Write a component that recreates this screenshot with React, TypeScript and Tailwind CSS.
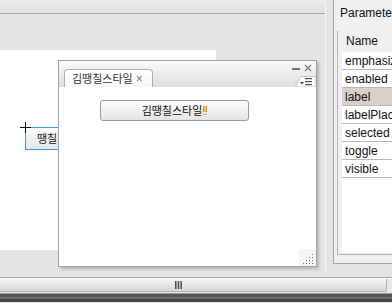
import React from 'react';

const ko = { fontFamily: '"Noto Sans CJK KR", "Noto Sans", sans-serif' };
const latin = { fontFamily: '"Liberation Sans", Arial, sans-serif' };

const params = ['emphasize', 'enabled', 'label', 'labelPlacement', 'selected', 'toggle', 'visible'];

const WindowControls: React.FC = () => (
  <div className="absolute right-[4px] top-[3px] flex items-center gap-[4px]">
    <svg width="8" height="8" viewBox="0 0 8 8">
      <rect x="0" y="4" width="8" height="2" fill="#6e6e6e" />
    </svg>
    <svg width="8" height="8" viewBox="0 0 8 8">
      <path d="M1 1 L7 7 M7 1 L1 7" stroke="#7a7a7a" strokeWidth="1.2" />
    </svg>
  </div>
);

const ViewMenu: React.FC = () => (
  <svg className="absolute right-0 bottom-0" width="21" height="11" viewBox="0 0 21 11">
    <path d="M0 11 L6 0.5 L21 0.5 L21 11 Z" fill="#fbfbfb" stroke="#c4c4c4" strokeWidth="1" />
    <path d="M5 6 L9 6 L7 8.5 Z" fill="#4a4a4a" />
    <rect x="10" y="2" width="7" height="1.2" fill="#4a4a4a" />
    <rect x="10" y="5" width="7" height="1.2" fill="#4a4a4a" />
    <rect x="10" y="8" width="7" height="1.2" fill="#4a4a4a" />
  </svg>
);

const Grip: React.FC = () => (
  <div className="absolute right-0 bottom-0 w-[17px] h-[17px] bg-[#f4f4f4] flex items-end justify-end pr-[3px] pb-[2px]">
    <svg width="10" height="10" viewBox="0 0 10 10">
      {[
        [8, 0], [8, 3], [8, 6], [8, 9],
        [5, 3], [5, 6], [5, 9],
        [2, 6], [2, 9],
        [-1, 9],
      ].map(([x, y], i) => (
        <rect key={i} x={x + 1} y={y} width="1" height="1" fill="#707070" />
      ))}
    </svg>
  </div>
);

const Marker: React.FC = () => (
  <svg width="4" height="9" viewBox="0 0 4 9" className="ml-[1px]">
    <rect x="0" y="0" width="1.5" height="6" fill="#f08a1c" />
    <rect x="2.5" y="0" width="1.5" height="6" fill="#f08a1c" />
    <rect x="0" y="7.5" width="1.5" height="1.5" fill="#f0a040" />
    <rect x="2.5" y="7.5" width="1.5" height="1.5" fill="#f0a040" />
  </svg>
);

const FloatingView: React.FC = () => (
  <div className="absolute left-[58px] top-[60px] w-[259px] h-[207px] border border-[#a2a2a2] bg-white flex flex-col shadow-[2px_2px_3px_rgba(0,0,0,0.22)]">
    <div className="relative h-[26px] shrink-0 bg-gradient-to-b from-[#fafafa] to-[#dedede] flex items-end pl-[5px]">
      <div
        className="h-[18px] w-[89px] rounded-t-[4px] border border-b-0 border-[#aeaeae] bg-gradient-to-b from-white to-[#f6f6f6] flex items-center pl-[7px] gap-[3px] text-[11px] leading-none text-[#333]"
        style={ko}
      >
        <span>김땡칠스타일</span>
        <span className="text-[#777] text-[12px]" style={latin}>×</span>
      </div>
      <WindowControls />
      <ViewMenu />
    </div>
    <div className="relative flex-1 bg-white pt-[13px] pl-[41px]">
      <div
        className="w-[149px] h-[21px] rounded-[3px] border border-[#9c9c9c] bg-gradient-to-b from-[#fcfcfc] to-[#e4e4e4] flex items-center justify-center text-[11px] leading-none text-[#111]"
        style={ko}
      >
        <span>김땡칠스타일</span>
        <Marker />
      </div>
      <Grip />
    </div>
  </div>
);

const Canvas: React.FC = () => (
  <div className="relative w-[216px] h-[200px] bg-white">
    <div
      className="absolute left-[25px] top-[77px] w-[60px] h-[23px] border border-[#3a9ae0] bg-gradient-to-b from-[#fafafa] to-[#e6e6e6] flex items-center pl-[11px] text-[11px] leading-none text-[#111] whitespace-nowrap overflow-hidden"
      style={ko}
    >
      땡칠
    </div>
    <svg className="absolute left-[20px] top-[72px]" width="11" height="11" viewBox="0 0 11 11">
      <rect x="0" y="5" width="11" height="1" fill="#000" />
      <rect x="5" y="0" width="1" height="11" fill="#000" />
    </svg>
  </div>
);

const ParameterPanel: React.FC = () => (
  <div className="w-[67px] h-[272px] border-l border-[#f6f6f6] pl-[7px] shrink-0">
    <div className="h-[264px] border-l border-b border-[#a4a4a4] bg-[#f0f0f0] flex flex-col" style={latin}>
      <div className="h-[31px] shrink-0 pl-[6px] pt-[6px] text-[12px] leading-[14px] text-[#111] whitespace-nowrap overflow-hidden">
        Parameter
      </div>
      <div className="ml-[3px] h-[224px] border-l border-b border-[#b4b4b4] pl-[4px] pb-[1px] flex flex-col">
        <div className="h-[21px] shrink-0 pl-[4px] pt-[3px] text-[12px] leading-[14px] text-[#111]">Name</div>
        <div className="flex-1 bg-white flex flex-col">
          {params.map((p) => (
            <div
              key={p}
              className={`h-[18px] shrink-0 border-b border-[#b8b8b8] pl-[3px] flex items-center text-[12px] leading-none text-[#111] whitespace-nowrap overflow-hidden ${
                p === 'label' ? 'bg-[#d6d2ca]' : 'bg-white'
              }`}
            >
              {p}
            </div>
          ))}
        </div>
      </div>
    </div>
  </div>
);

const BottomBar: React.FC = () => (
  <div className="shrink-0 flex flex-col">
    <div className="h-[1px] bg-[#a2a2a2]" />
    <div className="h-[1px] bg-white" />
    <div className="h-[13px] flex">
      <div className="w-[387px] h-full border-r border-b border-[#b0b0b0] rounded-br-[2px] bg-gradient-to-b from-[#f6f6f6] to-[#d6d6d6] flex items-center justify-center pr-[30px]">
        <svg width="7" height="8" viewBox="0 0 7 8">
          <rect x="0" y="0" width="1.5" height="8" fill="#4c4c4c" />
          <rect x="2.7" y="0" width="1.5" height="8" fill="#4c4c4c" />
          <rect x="5.4" y="0" width="1.5" height="8" fill="#4c4c4c" />
        </svg>
      </div>
      <div className="flex-1 bg-[#e8e8e8]" />
    </div>
    <div className="h-[1px] bg-[#e6e6e6]" />
    <div className="h-[1px] bg-[#9a9a9a]" />
    <div className="h-[3px] bg-[#555]" />
    <div className="h-[2px] bg-[#6a6a6a]" />
    <div className="h-[3px] bg-[#454545]" />
  </div>
);

const App: React.FC = () => {
  return (
    <div className="w-[392px] h-[303px] bg-[#e4e4e4] flex flex-col overflow-hidden relative">
      <div className="h-[277px] flex shrink-0">
        <div className="w-[325px] shrink-0 flex flex-col relative">
          <div className="h-[14px] shrink-0 bg-gradient-to-b from-[#ececec] to-[#e0e0e0] border-b border-[#a8a8a8]" />
          <div className="h-[36px] shrink-0" />
          <Canvas />
          <FloatingView />
        </div>
        <ParameterPanel />
      </div>
      <BottomBar />
    </div>
  );
};

export default App;
